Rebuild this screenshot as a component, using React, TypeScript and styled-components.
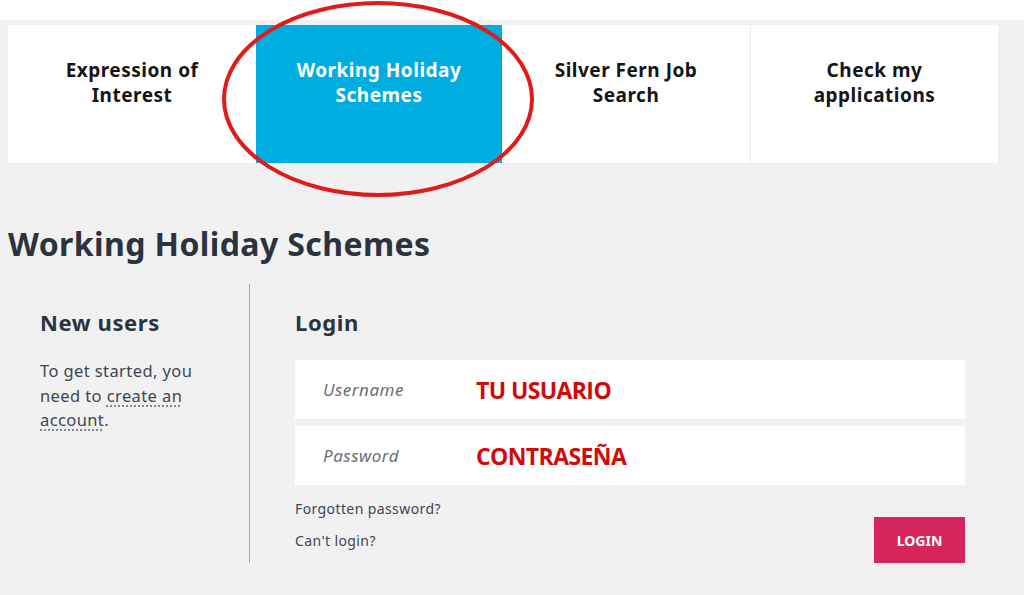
import styled, { createGlobalStyle } from 'styled-components';

const GlobalStyle = createGlobalStyle`
    html, body {
        margin: 0;
        padding: 0;
        background: #f1f1f1;
        font-family: 'Noto Sans', 'Open Sans', sans-serif;
    }
    * {
        box-sizing: border-box;
    }
`;

const tabs = [
    { lines: ['Expression of', 'Interest'], active: false },
    { lines: ['Working Holiday', 'Schemes'], active: true },
    { lines: ['Silver Fern Job', 'Search'], active: false },
    { lines: ['Check my', 'applications'], active: false },
];

const App = () => {
    return (
        <Page>
            <GlobalStyle />
            <TopStrip />
            <TabBarWrap>
                <TabBar>
                    {tabs.map((tab, index) => (
                        <Tab key={index} $active={tab.active} $divider={index === 3}>
                            {tab.lines[0]}
                            <br />
                            {tab.lines[1]}
                        </Tab>
                    ))}
                </TabBar>
                <Annotation viewBox="0 0 320 200" width="320" height="200">
                    <ellipse cx="160" cy="100" rx="154" ry="96" fill="none" stroke="#e01b1b" strokeWidth="4" />
                </Annotation>
            </TabBarWrap>

            <PageTitle>Working Holiday Schemes</PageTitle>

            <Columns>
                <NewUsers>
                    <SectionTitle>New users</SectionTitle>
                    <Intro>
                        To get started, you need to <DottedLink>create an account</DottedLink>.
                    </Intro>
                </NewUsers>

                <LoginSection>
                    <SectionTitle>Login</SectionTitle>
                    <Fields>
                        <Field>
                            <FieldLabel>Username</FieldLabel>
                            <FieldNote>TU USUARIO</FieldNote>
                        </Field>
                        <Field>
                            <FieldLabel>Password</FieldLabel>
                            <FieldNote>CONTRASEÑA</FieldNote>
                        </Field>
                    </Fields>
                    <LoginFooter>
                        <HelpLinks>
                            <HelpLink>Forgotten password?</HelpLink>
                            <HelpLink>Can't login?</HelpLink>
                        </HelpLinks>
                        <LoginButton>LOGIN</LoginButton>
                    </LoginFooter>
                </LoginSection>
            </Columns>
        </Page>
    );
};

const Page = styled.div`
    width: 1024px;
    min-height: 595px;
    background: #f1f1f1;
    overflow: hidden;
`;

const TopStrip = styled.div`
    height: 20px;
    background: #ffffff;
`;

const TabBarWrap = styled.div`
    position: relative;
    margin: 5px 26px 0 8px;
`;

const TabBar = styled.nav`
    display: grid;
    grid-template-columns: 248px 246px 248px 248px;
    height: 138px;
    background: #ffffff;
`;

const Tab = styled.div<{ $active: boolean; $divider: boolean }>`
    padding-top: 33px;
    text-align: center;
    font-size: 19px;
    font-weight: 700;
    line-height: 25px;
    letter-spacing: 0.5px;
    color: ${(p) => (p.$active ? '#ffffff' : '#151515')};
    background: ${(p) => (p.$active ? '#00ade0' : '#ffffff')};
    border-left: ${(p) => (p.$divider ? '1px solid #ececec' : 'none')};
`;

const Annotation = styled.svg`
    position: absolute;
    left: 210px;
    top: -26px;
    pointer-events: none;
`;

const PageTitle = styled.h1`
    margin: 61px 0 0 8px;
    font-size: 32px;
    font-weight: 700;
    line-height: 40px;
    color: #2b3340;
    letter-spacing: 0.4px;
`;

const Columns = styled.div`
    display: grid;
    grid-template-columns: 250px 715px;
    margin-top: 20px;
`;

const NewUsers = styled.section`
    padding: 24px 0 0 40px;
    border-right: 1px solid #a8a8a8;
    height: 279px;
`;

const SectionTitle = styled.h2`
    margin: 0;
    font-size: 22px;
    font-weight: 700;
    line-height: 28px;
    letter-spacing: 0.6px;
    color: #2b3340;
`;

const Intro = styled.p`
    margin: 23px 0 0;
    width: 185px;
    font-size: 16.5px;
    line-height: 24.5px;
    letter-spacing: 0.4px;
    color: #3e4652;
`;

const DottedLink = styled.span`
    text-decoration: underline dotted #6a7280;
    text-underline-offset: 4px;
`;

const LoginSection = styled.section`
    padding: 24px 0 0 45px;
`;

const Fields = styled.div`
    display: flex;
    flex-direction: column;
    gap: 7px;
    margin-top: 24px;
`;

const Field = styled.div`
    display: flex;
    align-items: center;
    height: 59px;
    background: #ffffff;
    padding-left: 28px;
`;

const FieldLabel = styled.span`
    width: 153px;
    font-size: 17px;
    font-style: italic;
    letter-spacing: 0.5px;
    color: #6b7079;
`;

const FieldNote = styled.span`
    font-family: 'Open Sans', sans-serif;
    font-size: 23px;
    font-weight: 700;
    letter-spacing: -0.6px;
    color: #d10a0a;
`;

const LoginFooter = styled.div`
    display: flex;
    justify-content: space-between;
    align-items: flex-start;
    margin-top: 14px;
`;

const HelpLinks = styled.div`
    display: flex;
    flex-direction: column;
    gap: 12px;
`;

const HelpLink = styled.span`
    font-size: 14px;
    line-height: 20px;
    letter-spacing: 0.4px;
    color: #3e4652;
`;

const LoginButton = styled.button`
    margin-top: 18px;
    width: 91px;
    height: 46px;
    border: none;
    background: #d6245c;
    color: #ffffff;
    font-family: 'Noto Sans', sans-serif;
    font-size: 14px;
    font-weight: 700;
`;

export default App;
